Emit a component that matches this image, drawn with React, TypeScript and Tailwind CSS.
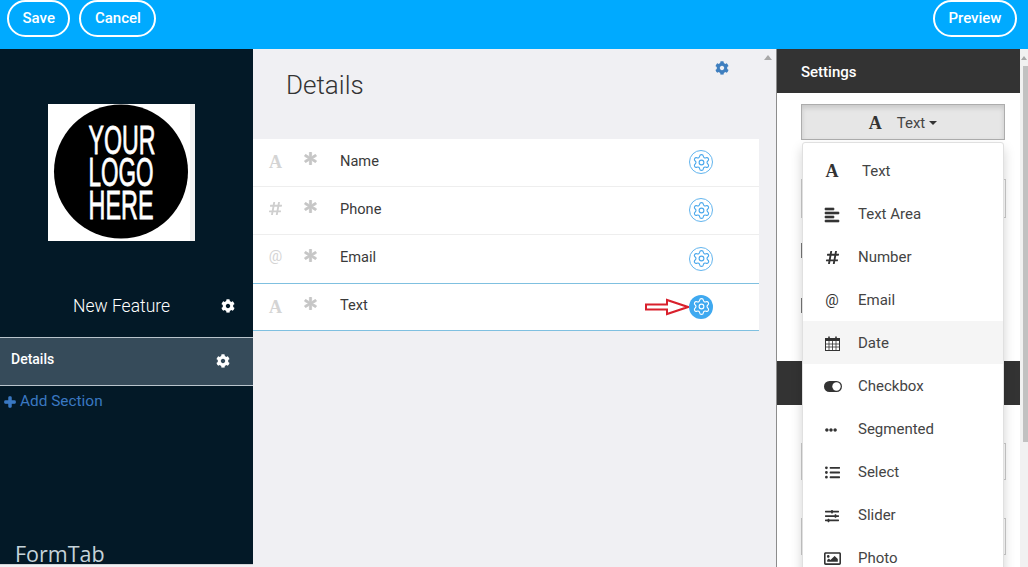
import type { ReactNode } from 'react';
import { Settings } from 'lucide-react';
import {
  FaAlignLeft,
  FaAsterisk,
  FaCog,
  FaEllipsisH,
  FaHashtag,
  FaListUl,
  FaPlus,
  FaRegImage,
  FaSlidersH,
} from 'react-icons/fa';

const serifA = (className: string) => (
  <span className={`font-['Liberation_Serif',serif] ${className}`}>A</span>
);

const CalendarIcon = () => (
  <svg width="15" height="15" viewBox="0 0 15 15">
    <rect x="0.5" y="2.5" width="14" height="12" fill="#fff" stroke="#333" />
    <rect x="0.5" y="2" width="14" height="3" fill="#333" />
    <path d="M0 8h15M0 11h15M4 5v10M7.5 5v10M11 5v10" stroke="#333" strokeWidth="0.8" />
    <path d="M4 0.5v3M11 0.5v3" stroke="#333" strokeWidth="1.6" />
  </svg>
);

const ToggleIcon = () => (
  <svg width="18" height="11" viewBox="0 0 18 11" className="ml-[2px]">
    <rect width="18" height="11" rx="5.5" fill="#333" />
    <circle cx="12.5" cy="5.5" r="4.2" fill="#fff" />
  </svg>
);

const fields: { label: string; icon: ReactNode; active?: boolean }[] = [
  { label: 'Name', icon: serifA('text-[18px] font-bold text-[#d4d4d4]') },
  { label: 'Phone', icon: <FaHashtag className="mb-[4px] text-[#cfcfcf]" size={15} /> },
  { label: 'Email', icon: <span className="mb-[5px] text-[15px] text-[#d4d4d4]">@</span> },
  { label: 'Text', icon: serifA('text-[18px] font-bold text-[#d4d4d4]'), active: true },
];

const fieldTypes: { label: string; icon: ReactNode; hover?: boolean; labelClass?: string }[] = [
  { label: 'Text', icon: serifA('text-[18px] font-bold text-[#333]'), labelClass: 'ml-[4px]' },
  { label: 'Text Area', icon: <FaAlignLeft size={16} stroke="currentColor" strokeWidth={20} /> },
  { label: 'Number', icon: <FaHashtag size={15} /> },
  { label: 'Email', icon: <span className="text-[15px]">@</span> },
  { label: 'Date', icon: <CalendarIcon />, hover: true },
  { label: 'Checkbox', icon: <ToggleIcon /> },
  { label: 'Segmented', icon: <FaEllipsisH size={12} className="mr-[3px]" /> },
  { label: 'Select', icon: <FaListUl size={15} /> },
  { label: 'Slider', icon: <FaSlidersH size={14} /> },
  { label: 'Photo', icon: <FaRegImage size={17} /> },
];

const PillButton = ({ children }: { children: ReactNode }) => (
  <button className="h-[37px] rounded-full border-2 border-white px-[13.5px] text-[15px] font-medium text-white">
    {children}
  </button>
);

const RedArrow = () => (
  <svg width="45" height="18" viewBox="0 0 45 18" className="mr-[-1px] shrink-0">
    <path
      d="M1 6.5H22V2L43 9L22 16V11.5H1Z"
      fill="#fff"
      stroke="#d9202c"
      strokeWidth="2"
    />
  </svg>
);

const LogoBox = () => (
  <svg width="147" height="137" viewBox="0 0 147 137" className="shrink-0">
    <rect width="147" height="137" fill="#fff" />
    <rect x="142" width="5" height="137" fill="#f1f1f1" />
    <circle cx="73" cy="67.5" r="67" fill="#000" />
    <g
      fill="#fff"
      stroke="#fff"
      strokeWidth="0.8"
      fontFamily="'Liberation Sans', sans-serif"
      fontSize="41"
      textAnchor="middle"
    >
      <text x="74" y="50" textLength="67" lengthAdjust="spacingAndGlyphs">YOUR</text>
      <text x="73" y="82" textLength="65" lengthAdjust="spacingAndGlyphs">LOGO</text>
      <text x="73" y="115" textLength="65" lengthAdjust="spacingAndGlyphs">HERE</text>
    </g>
  </svg>
);

const App = () => {
  return (
    <div className="relative flex h-[567px] w-[1028px] flex-col overflow-hidden bg-white font-['Roboto',sans-serif]">
      {/* Top bar */}
      <header className="flex h-[49px] shrink-0 items-start justify-between bg-[#00aaff] pl-[7px] pr-[11px]">
        <div className="flex gap-[9px]">
          <PillButton>Save</PillButton>
          <PillButton>Cancel</PillButton>
        </div>
        <PillButton>Preview</PillButton>
      </header>

      <div className="flex min-h-0 flex-1">
        {/* Sidebar */}
        <aside className="flex w-[253px] shrink-0 flex-col bg-[#f0f0f3]">
          <div className="flex h-[515px] flex-col bg-[#031927] text-white">
            <div className="flex pl-[48px] pt-[55px]">
              <LogoBox />
            </div>
            <div className="mt-[48px] flex h-[34px] items-center pl-[73px] pr-[18px]">
              <span className="flex-1 text-[17.5px] font-light">New Feature</span>
              <FaCog size={14} />
            </div>
            <div className="mt-[14px] flex h-[49px] items-start border-y border-[#b9c4cc] bg-[#364b5a] pl-[11px] pr-[23px] pt-[11px]">
              <span className="flex-1 text-[14px] font-medium">Details</span>
              <FaCog size={14} className="mt-[5px]" />
            </div>
            <div className="mt-[4px] flex items-center gap-[4px] pl-[4px] text-[15.4px] text-[#3a78c2]">
              <FaPlus size={12} stroke="currentColor" strokeWidth={50} />
              <span>Add Section</span>
            </div>
            <div className="mt-auto pl-[15px] font-['Open_Sans',sans-serif] text-[21.5px] leading-[20px] text-[#c5d3da]">
              FormTab
            </div>
          </div>
          <div className="h-[3px] w-[337px] rounded-tr border-t border-[#d5d5d8]" />
        </aside>

        {/* Form area */}
        <main className="flex w-[524px] shrink-0 flex-col border-r border-[#8c8c8c] bg-[#f0f0f3]">
          <div className="flex h-[90px] items-start">
            <h1 className="mt-[20px] flex-1 pl-[33px] text-[26px] font-light leading-[32px] text-[#333]">
              Details
            </h1>
            <FaCog size={14} className="mt-[12px] text-[#3f7fbf]" />
            <span className="ml-[35px] mr-[4px] mt-[6px] h-0 w-0 border-x-[4px] border-b-[5px] border-x-transparent border-b-[#a8a8a8]" />
          </div>
          <div className="mr-[17px] bg-white">
            {fields.map((field, i) => (
              <div
                key={field.label}
                className={
                  field.active
                    ? 'flex h-[48px] items-center border-y border-[#7fc0e0] pr-[46px] text-[14.6px] text-[#3a3a3a]'
                    : i === 2
                      ? 'flex h-[48px] items-center pr-[46px] text-[14.6px] text-[#3a3a3a]'
                      : 'flex h-[48px] items-center border-b border-[#eeeeee] pr-[46px] text-[14.6px] text-[#3a3a3a]'
                }
              >
                <div className="flex h-[16px] w-[44px] shrink-0 items-center justify-center pl-[1px]">
                  {field.icon}
                </div>
                <div className="flex w-[26px] shrink-0 justify-center">
                  <FaAsterisk
                    size={13}
                    stroke="currentColor"
                    strokeWidth={30}
                    className="mb-[8px] text-[#c6c6c6]"
                  />
                </div>
                <span className="mb-[2px] ml-[17px] flex-1">{field.label}</span>
                {field.active && <RedArrow />}
                <div
                  className={
                    field.active
                      ? 'mb-[1px] flex h-[24px] w-[24px] items-center justify-center rounded-full bg-[#3fa9f0] text-white'
                      : 'mb-[1px] flex h-[24px] w-[24px] items-center justify-center rounded-full border border-[#63b5ee] text-[#4aa8ec]'
                  }
                >
                  <Settings size={19} strokeWidth={1.4} />
                </div>
              </div>
            ))}
          </div>
        </main>

        {/* Settings panel */}
        <section className="flex w-[243px] shrink-0 flex-col">
          <div className="flex h-[44px] shrink-0 items-center bg-[#333333] pl-[24px] pt-[2px] text-[15px] font-medium text-white">
            Settings
          </div>
          <button className="ml-[24px] mt-[11px] flex h-[36px] w-[204px] shrink-0 items-center justify-center border border-[#adadad] bg-[#e6e6e6] pt-[2px] text-[15px] text-[#444] shadow-[inset_0_3px_5px_rgba(0,0,0,0.125)]">
            {serifA('mr-[15px] text-[18px] font-bold text-[#333]')}
            Text
            <span className="ml-[4px] h-0 w-0 border-x-[4px] border-t-[4px] border-x-transparent border-t-[#333]" />
          </button>
          <div className="ml-[24px] mt-[39px] h-[39px] w-[205px] shrink-0 border border-[#cccccc]" />
          <div className="ml-[24px] mt-[25px] h-[15px] w-px shrink-0 bg-[#777]" />
          <div className="ml-[24px] mt-[40px] h-[15px] w-px shrink-0 bg-[#777]" />
          <div className="mt-[48px] h-[44px] shrink-0 bg-[#333333]" />
          <div className="ml-[24px] mt-[38px] h-[37px] w-[205px] shrink-0 border border-[#cccccc]" />
          <div className="ml-[24px] mt-[38px] h-[37px] w-[205px] shrink-0 border border-[#cccccc]" />
        </section>

        {/* Page scrollbar */}
        <div className="flex flex-1 flex-col items-end bg-[#f1f1f1]">
          <span className="mr-[1px] mt-[7px] h-0 w-0 border-x-[3px] border-b-[4px] border-x-transparent border-b-[#a8a8a8]" />
          <div className="mt-[6px] h-[376px] w-[5px] bg-[#c1c1c1]" />
        </div>
      </div>

      {/* Open type dropdown */}
      <ul className="absolute left-[802px] top-[142px] w-[202px] rounded-t-[3px] border border-[#e0e0e0] bg-white pt-[6px] text-[15px] text-[#444] shadow-[0_6px_12px_rgba(0,0,0,0.175)]">
        {fieldTypes.map((item) => (
          <li
            key={item.label}
            className={
              item.hover
                ? 'flex h-[43px] items-center bg-[#f5f5f5] pt-[2px]'
                : 'flex h-[43px] items-center pt-[2px]'
            }
          >
            <span className="flex w-[55px] shrink-0 pl-[19px] text-[#333]">
              <span className="flex w-[20px] justify-center">{item.icon}</span>
            </span>
            <span className={item.labelClass}>{item.label}</span>
          </li>
        ))}
      </ul>
    </div>
  );
};

export default App;
